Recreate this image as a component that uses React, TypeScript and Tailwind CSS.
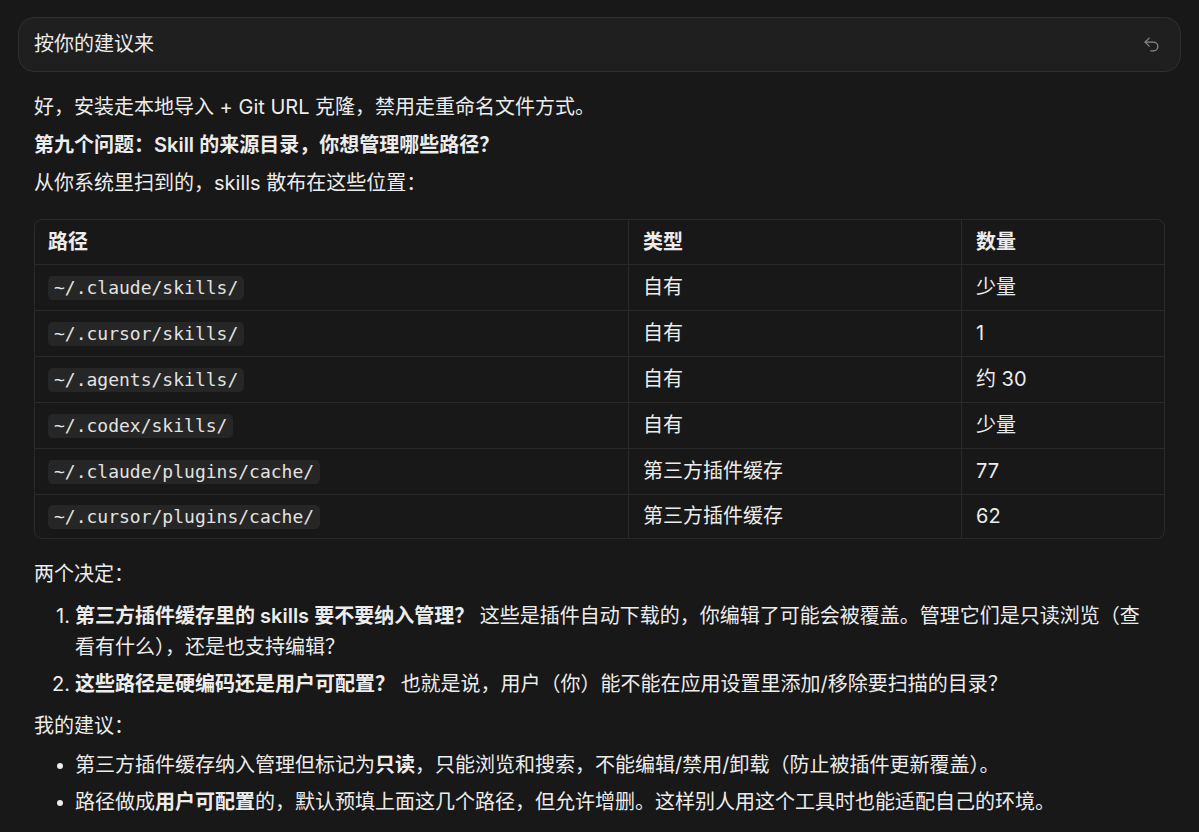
import { Undo2 } from "lucide-react"

const rows = [
  { path: "~/.claude/skills/", type: "自有", count: "少量" },
  { path: "~/.cursor/skills/", type: "自有", count: "1" },
  { path: "~/.agents/skills/", type: "自有", count: "约 30" },
  { path: "~/.codex/skills/", type: "自有", count: "少量" },
  { path: "~/.claude/plugins/cache/", type: "第三方插件缓存", count: "77" },
  { path: "~/.cursor/plugins/cache/", type: "第三方插件缓存", count: "62" },
]

function Code({ children }: { children: string }) {
  return (
    <code className="inline-flex h-[24px] items-center rounded-[5px] bg-[#262626] px-[6px] font-['DejaVu_Sans_Mono',monospace] text-[18px] leading-none text-[#e2e2e2]">
      {children}
    </code>
  )
}

function PathTable() {
  return (
    <div className="mt-[13px] mb-[13px] rounded-lg border border-[#2a2a2a]">
      <div className="flex h-[44px] items-center font-semibold">
        <div className="w-[593px] pl-[13px]">路径</div>
        <div className="flex h-full w-[333px] items-center border-l border-[#2a2a2a] pl-[14px]">类型</div>
        <div className="flex h-full flex-1 items-center border-l border-[#2a2a2a] pl-[14px]">数量</div>
      </div>
      {rows.map((row, i) => (
        <div
          key={row.path}
          className={`flex items-center border-t border-[#2a2a2a] ${i === rows.length - 1 ? "h-[44px]" : "h-[46px]"}`}
        >
          <div className="w-[593px] pl-[13px]">
            <Code>{row.path}</Code>
          </div>
          <div className="flex h-full w-[333px] items-center border-l border-[#2a2a2a] pl-[14px]">{row.type}</div>
          <div className="flex h-full flex-1 items-center border-l border-[#2a2a2a] pl-[14px]">{row.count}</div>
        </div>
      ))}
    </div>
  )
}

function Dot() {
  return (
    <span className="flex w-[41px] shrink-0 items-center justify-end pr-[12px]">
      <span className="h-[6px] w-[6px] rounded-full bg-[#ececec]" />
    </span>
  )
}

export default function App() {
  return (
    <div className="min-h-screen bg-[#181818] px-[18px] pt-[17px] font-['Inter','Noto_Sans_CJK_SC',sans-serif] text-[20px] leading-[31px] text-[#ececec]">
      {/* user message */}
      <div className="flex h-[55px] items-center justify-between rounded-2xl border border-[#2f2f2f] bg-[#1f1f1f] pl-[15px] pr-[19px]">
        <span>按你的建议来</span>
        <Undo2 className="h-[19px] w-[19px] text-[#8a8a8a]" strokeWidth={1.6} />
      </div>

      {/* assistant reply */}
      <div className="mt-[20px] flex flex-col gap-[7px] px-[16px]">
        <p>好，安装走本地导入 + Git URL 克隆，禁用走重命名文件方式。</p>
        <p className="font-semibold">第九个问题：Skill 的来源目录，你想管理哪些路径？</p>
        <p>从你系统里扫到的，skills 散布在这些位置：</p>

        <PathTable />

        <p>两个决定：</p>
        <ol className="mt-[4px] mb-[4px] flex flex-col gap-[6px]">
          <li className="flex">
            <span className="w-[41px] shrink-0 pr-[5px] text-right">1.</span>
            <span>
              <strong className="font-semibold">第三方插件缓存里的 skills 要不要纳入管理？</strong> 这些是插件自动下载的，你编辑了可能会被覆盖。管理它们是只读浏览（查
              <br />
              看有什么），还是也支持编辑？
            </span>
          </li>
          <li className="flex">
            <span className="w-[41px] shrink-0 pr-[5px] text-right">2.</span>
            <span>
              <strong className="font-semibold">这些路径是硬编码还是用户可配置？</strong> 也就是说，用户（你）能不能在应用设置里添加/移除要扫描的目录？
            </span>
          </li>
        </ol>

        <p>我的建议：</p>
        <ul className="mt-[1px] flex flex-col gap-[6px]">
          <li className="flex">
            <Dot />
            <span>
              第三方插件缓存纳入管理但标记为<strong className="font-semibold">只读</strong>，只能浏览和搜索，不能编辑/禁用/卸载（防止被插件更新覆盖）。
            </span>
          </li>
          <li className="flex">
            <Dot />
            <span>
              路径做成<strong className="font-semibold">用户可配置</strong>的，默认预填上面这几个路径，但允许增删。这样别人用这个工具时也能适配自己的环境。
            </span>
          </li>
        </ul>
      </div>
    </div>
  )
}
